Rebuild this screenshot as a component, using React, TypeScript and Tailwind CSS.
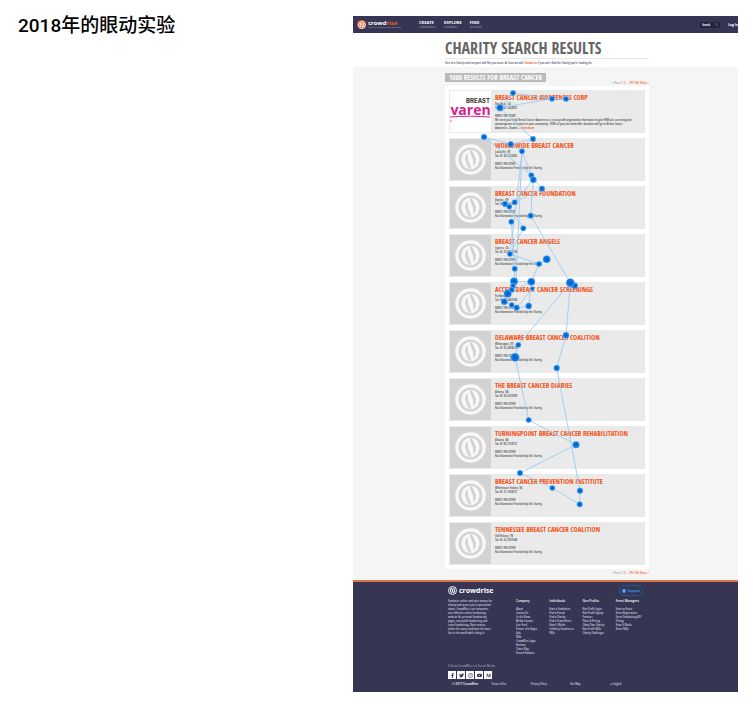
import type { ReactNode } from "react";
import { FaFacebookF, FaInstagram, FaMediumM, FaTwitter, FaYoutube } from "react-icons/fa";

type Charity = {
  name: string;
  city: string;
  taxId: string;
  story?: string;
};

const charities: Charity[] = [
  {
    name: "Breast Cancer Awareness Corp",
    city: "Van Nuys, CA",
    taxId: "47-2428857",
    story:
      "We need your help! Breast Cancer Awareness is a non-profit organization that wants to give FREE pre-screening and mammograms to women in your community. 100% of your tax deductible donation will go to Breast Cancer Awareness. Donate...",
  },
  { name: "Worldwide Breast Cancer", city: "Louisville, KY", taxId: "45-2122052" },
  { name: "Breast Cancer Foundation", city: "Dayton, OH", taxId: "31-1612006" },
  { name: "Breast Cancer Angels", city: "Cypress, CA", taxId: "33-0927896" },
  { name: "Access Breast Cancer Screenings", city: "Portland, OR", taxId: "26-4401685" },
  { name: "Delaware Breast Cancer Coalition", city: "Wilmington, DE", taxId: "52-2090274" },
  { name: "The Breast Cancer Diaries", city: "Atlanta, GA", taxId: "30-2237898" },
  { name: "Turningpoint Breast Cancer Rehabilitation", city: "Atlanta, GA", taxId: "06-1720721" },
  { name: "Breast Cancer Prevention Institute", city: "Whitehouse Station, NJ", taxId: "31-1654121" },
  { name: "Tennessee Breast Cancer Coalition", city: "Old Hickory, TN", taxId: "62-1637648" },
];

const footerColumns = [
  {
    title: "Company",
    links: ["About", "Contact Us", "In the News", "Media Contact", "Live Feed", "Picture of a Hippo", "Jobs", "FAQs", "CrowdRise Logos", "Reviews", "Chaos Blog", "Decent Humans"],
  },
  {
    title: "Individuals",
    links: ["Start a Fundraiser", "Find a Friend", "Find a Charity", "Find a Team/Event", "How It Works", "Celebrity Fundraisers", "FAQs"],
  },
  {
    title: "Non Profits",
    links: ["Non Profit Login", "Non Profit Signup", "Features", "Plans & Pricing", "Claim Your Charity", "Non Profit FAQs", "Charity Challenges"],
  },
  {
    title: "Event Managers",
    links: ["Start an Event", "Event Registration", "Event Fundraising API", "Pricing", "How It Works", "Event FAQs"],
  },
];

const socials = [
  { name: "Facebook", icon: <FaFacebookF /> },
  { name: "Twitter", icon: <FaTwitter /> },
  { name: "Instagram", icon: <FaInstagram /> },
  { name: "YouTube", icon: <FaYoutube /> },
  { name: "Medium", icon: <FaMediumM /> },
];

// [x, y, radius]
const fixations: [number, number, number][] = [
  [67, 7, 2.8], [106, 12.7, 2.8], [120, 13, 2.8], [54, 21.7, 3.5], [87, 53, 2.9],
  [38, 51, 3], [64.7, 58.3, 3], [76, 65.3, 2.8], [85.3, 89.3, 2.8], [87.3, 93.7, 3.2],
  [96, 102.7, 2.9], [68.7, 116.3, 2.8], [59, 118, 3], [63.3, 120.7, 2.7], [84.7, 129.7, 2.9],
  [65.3, 135.7, 2.8], [77.3, 142.3, 2.8], [64, 168, 2.8], [100.7, 173.3, 3.8], [93, 178, 2.8],
  [68.7, 182.7, 2.8], [68, 195.3, 3.9], [85.3, 195.7, 3.8], [128.7, 199.7, 3.2], [124.3, 196.7, 4.3],
  [86.3, 202.7, 2.2], [67, 200, 2.8], [65.7, 204, 2.8], [61.7, 207.7, 3.9], [58.3, 215.7, 3.3],
  [65.7, 219, 2.7], [70.7, 221.7, 2.9], [82.7, 220, 3.2], [120, 249.3, 3.2], [72.3, 259, 2.8],
  [69, 271.3, 4.3], [110.7, 282, 3.1], [82.7, 334, 2.8], [130, 358.7, 3.5], [74, 387, 2.9],
  [106.3, 402, 2.8], [134, 404.7, 3], [133.7, 418.3, 2.9],
];

const saccades = [
  "67,7 106,12.7 120,13",
  "106,12.7 54,21.7 87,53 64.7,58.3 38,51 85.3,89.3",
  "67,7 54,21.7",
  "64.7,58.3 76,65.3 87.3,93.7 84.7,129.7 124.3,196.7",
  "76,65.3 74,85 64,168",
  "85.3,89.3 96,102.7 68.7,116.3 59,118 63.3,120.7 77.3,142.3 64,168 93,178 100.7,173.3",
  "76,65.3 70,195",
  "87.3,93.7 68.7,116.3",
  "65.3,135.7 68.7,182.7 68,195.3 85.3,195.7 82.7,220 70.7,221.7 65.7,219 58.3,215.7",
  "93,178 85.3,195.7 61.7,207.7",
  "86.3,202.7 70.7,221.7",
  "124.3,196.7 72.3,259 69,271.3 82.7,334 130,358.7 74,387 106.3,402 133.7,418.3 134,404.7 110.7,282 120,249.3 124.3,196.7",
];

function CrowdriseMark({ className }: { className: string }) {
  return (
    <svg viewBox="0 0 40 40" className={className} aria-hidden="true">
      <circle cx="20" cy="20" r="17.6" fill="none" stroke="currentColor" strokeWidth="4.2" />
      <path
        d="M20 7.5C13 7.5 8.5 13 8.5 20S13 32.5 20 32.5S31.5 27 31.5 20S27 7.5 20 7.5ZM14 14C11 21 15 25 18 32L21 31.5C20 25 15 21 17 13ZM26 26C29 19 25 15 22 8L19 8.5C20 15 25 19 23 27Z"
        fill="currentColor"
        fillRule="evenodd"
      />
    </svg>
  );
}

function GazePlot() {
  return (
    <svg viewBox="-1 0 204 484" className="pointer-events-none absolute top-0 left-0 h-[484px] w-[204px] overflow-visible" aria-hidden="true">
      {saccades.map((points) => (
        <polyline key={points} points={points} fill="none" stroke="#9ccbf2" strokeWidth="0.9" />
      ))}
      {fixations.map(([x, y, r]) => (
        <g key={`${x}:${y}`}>
          <circle cx={x} cy={y} r={r} fill="#0878e4" stroke="#b7dcfa" strokeWidth="0.4" />
          <circle cx={x} cy={y} r={r * 0.35} fill="#0759b5" />
        </g>
      ))}
    </svg>
  );
}

function Pager() {
  return (
    <nav className="text-right font-['Open_Sans',sans-serif] text-[3px] leading-[4px] font-semibold text-[#f4611f]" aria-label="Pages">
      <span className="font-normal text-gray-500">« Prev</span> <a href="#1">1</a>{" "}
      <a href="#2">2</a> ... <a href="#99">99</a> <a href="#100">100</a> <a href="#next">Next »</a>
    </nav>
  );
}

function AwarenessThumb() {
  return (
    <div className="h-[41px] w-[41px] shrink-0 overflow-hidden bg-white">
      <p className="pt-[7px] pr-px text-right font-[Inter,sans-serif] text-[6px] leading-[6px] font-bold text-[#333]">BREAST</p>
      <p className="flex justify-center font-['Open_Sans',sans-serif] text-[14px] leading-[11px] font-bold text-[#d6208f]">varen</p>
      <svg viewBox="0 0 41 12" className="h-3 w-full" aria-hidden="true">
        <path d="M0 2C14 1 27 1 40 2" fill="none" stroke="#d6208f" strokeWidth="1" />
        <circle cx="1" cy="6" r="0.7" fill="#d6208f" />
      </svg>
    </div>
  );
}

function CharityRow({ charity }: { charity: Charity }) {
  return (
    <li className="flex h-[43px] items-center bg-[#eaeaea] pl-px">
      {charity.story ? (
        <AwarenessThumb />
      ) : (
        <div className="flex h-[41px] w-[41px] shrink-0 items-center justify-center bg-[#d3d3d3]">
          <CrowdriseMark className="h-[31px] w-[31px] text-[#f8f8f8]" />
        </div>
      )}
      <div className="min-w-0 flex-1 self-start pt-[3px] pr-3 pl-1 text-[3px] leading-[4px] text-[#666]">
        <h3 className="text-[7px] leading-[9px] font-bold whitespace-nowrap text-[#f4500f] uppercase">
          <a href="#charity">{charity.name}</a>
        </h3>
        <p>{charity.city}</p>
        <p>Tax ID: {charity.taxId}</p>
        <p className="mt-1">HERE'S THE STORY</p>
        <p>
          {charity.story ?? "No Information Provided by the Charity."}
          {charity.story ? <a href="#more" className="text-[#f4611f]"> Learn more</a> : null}
        </p>
      </div>
    </li>
  );
}

function NavItem({ title, children }: { title: string; children: ReactNode }) {
  return (
    <a href="#nav" className="block text-[3px] leading-[4px] text-[#a3a3b8]">
      <span className="block text-[4px] font-bold text-white">{title}</span>
      {children}
    </a>
  );
}

function SiteHeader() {
  return (
    <header className="flex h-[17px] items-center bg-[#363654] pl-1 text-white">
      <span className="flex h-[9px] w-[9px] items-center justify-center rounded-full bg-[#d9582b]">
        <CrowdriseMark className="h-[8px] w-[8px] text-white" />
      </span>
      <div className="ml-0.5 w-[51px]">
        <p className="font-['Open_Sans',sans-serif] text-[6px] leading-[6px] font-bold">
          crowd<span className="text-[#e85e28]">rise</span>
        </p>
        <p className="text-[2px] leading-[3px] whitespace-nowrap text-[#8f8fa6]">If you don't give back no one will like you</p>
      </div>
      <nav className="flex gap-2 font-['Open_Sans',sans-serif]">
        <NavItem title="CREATE">a fundraiser</NavItem>
        <NavItem title="EXPLORE">crowdrise</NavItem>
        <NavItem title="FIND">an event</NavItem>
      </nav>
      <label className="ml-auto flex h-[6px] w-5 items-center rounded-[1px] bg-[#25253f] px-0.5">
        <input type="text" aria-label="Search" placeholder="Search" className="w-3 bg-transparent text-[3px] leading-[4px] placeholder:text-white" />
        <svg viewBox="0 0 8 8" className="ml-auto h-[3px] w-[3px]" fill="none" stroke="#9a9ab0" aria-hidden="true">
          <circle cx="3" cy="3" r="2.3" />
          <path d="M5 5L8 8" />
        </svg>
      </label>
      <a href="#login" className="ml-2 text-[4px] leading-[6px] font-bold">Log In</a>
    </header>
  );
}

function SiteFooter() {
  return (
    <footer className="border-t-2 border-[#df7444] bg-[#363654] pb-[6px] pl-[3px] text-[3px] leading-[4px] text-[#b5b5c8]">
      <div className="mx-auto w-[204px] pt-[3px] pl-[3px]">
        <div className="flex h-[11px] items-center justify-between pr-1.5">
          <div className="flex items-center gap-0.5 text-white">
            <CrowdriseMark className="h-[9px] w-[9px]" />
            <p className="font-['Open_Sans',sans-serif] text-[7px] leading-[9px] font-bold">crowdrise</p>
          </div>
          <button type="button" className="flex h-[11px] w-6 items-center justify-center gap-0.5 rounded-full border border-[#235b8c] text-[4px] text-[#2f8fd8]">
            <span className="flex h-1 w-1 items-center justify-center rounded-full bg-[#1f9bf0] text-[3px] font-bold text-white">?</span>
            Support
          </button>
        </div>
        <div className="mt-[3px] flex">
          <p className="w-[68px] shrink-0 pr-6">
            Fundraise online and raise money for charity and causes you're passionate about. CrowdRise is an innovative, cost-effective online fundraising website for personal fundraising pages, non profit fundraising and event fundraising. Raise money online for causes and have the most fun in the world while doing it.
          </p>
          <div className="grid flex-1 grid-cols-4">
            {footerColumns.map((column) => (
              <div key={column.title}>
                <h4 className="font-['Open_Sans',sans-serif] font-semibold whitespace-nowrap text-white">{column.title}</h4>
                <ul className="mt-1">
                  {column.links.map((link) => (
                    <li key={link} className="whitespace-nowrap"><a href="#link">{link}</a></li>
                  ))}
                </ul>
              </div>
            ))}
          </div>
        </div>
        <p className="mt-[9px] font-['Open_Sans',sans-serif]">Follow CrowdRise on Social Media</p>
        <div className="mt-[3px] flex gap-px">
          {socials.map((social) => (
            <a key={social.name} href="#social" aria-label={social.name} className="flex h-2 w-2 items-center justify-center bg-white text-[5px] text-[#363654]">
              {social.icon}
            </a>
          ))}
        </div>
        <div className="mt-[3px] grid grid-cols-5 pl-1">
          <span className="font-['Open_Sans',sans-serif] font-semibold text-white">© 2017 CrowdRise</span>
          <a href="#terms">Terms of Use</a>
          <a href="#privacy">Privacy Policy</a>
          <a href="#map">Site Map</a>
          <a href="#language">⊕ English</a>
        </div>
      </div>
    </footer>
  );
}

export default function App() {
  return (
    <main className="grid grid-cols-[353fr_400fr] bg-white pt-4 pb-3">
      <h1 className="pl-[18px] font-[Roboto,'Noto_Sans_CJK_SC',sans-serif] text-[19px] leading-5 font-medium text-black">
        2018年的眼动实验
      </h1>
      <div className="mr-[15px] font-['Open_Sans_Condensed','Open_Sans',sans-serif]">
        <SiteHeader />
        <section className="pl-[3px]">
          <div className="mx-auto h-[34px] w-[204px] pt-[5px]">
            <h2 className="border-b border-gray-200 pt-px text-[16px] leading-[19px] font-bold whitespace-nowrap text-[#666]">CHARITY SEARCH RESULTS</h2>
            <p className="pt-0.5 text-[3px] leading-[4px] whitespace-nowrap text-gray-500">
              Give to a Charity and everyone will like you more. At least we will. <a href="#contact" className="text-[#f4611f]">Contact us</a> if you can't find the Charity you're looking for.
            </p>
          </div>
        </section>
        <section className="bg-[#f5f5f5] pt-[6px] pb-[5px] pl-[3px]">
          <div className="mx-auto w-[204px]">
            <div className="flex h-[13px] items-start justify-between">
              <h2 className="bg-[#bbb] px-1 text-[7px] leading-[9px] font-bold whitespace-nowrap text-white">1000 RESULTS FOR BREAST CANCER</h2>
              <div className="self-end pb-px"><Pager /></div>
            </div>
            <div className="relative mb-0.5 bg-white p-1">
              <ul className="flex flex-col gap-[5px]">
                {charities.map((charity) => (
                  <CharityRow key={charity.name} charity={charity} />
                ))}
              </ul>
              <GazePlot />
            </div>
            <Pager />
          </div>
        </section>
        <SiteFooter />
      </div>
    </main>
  );
}
